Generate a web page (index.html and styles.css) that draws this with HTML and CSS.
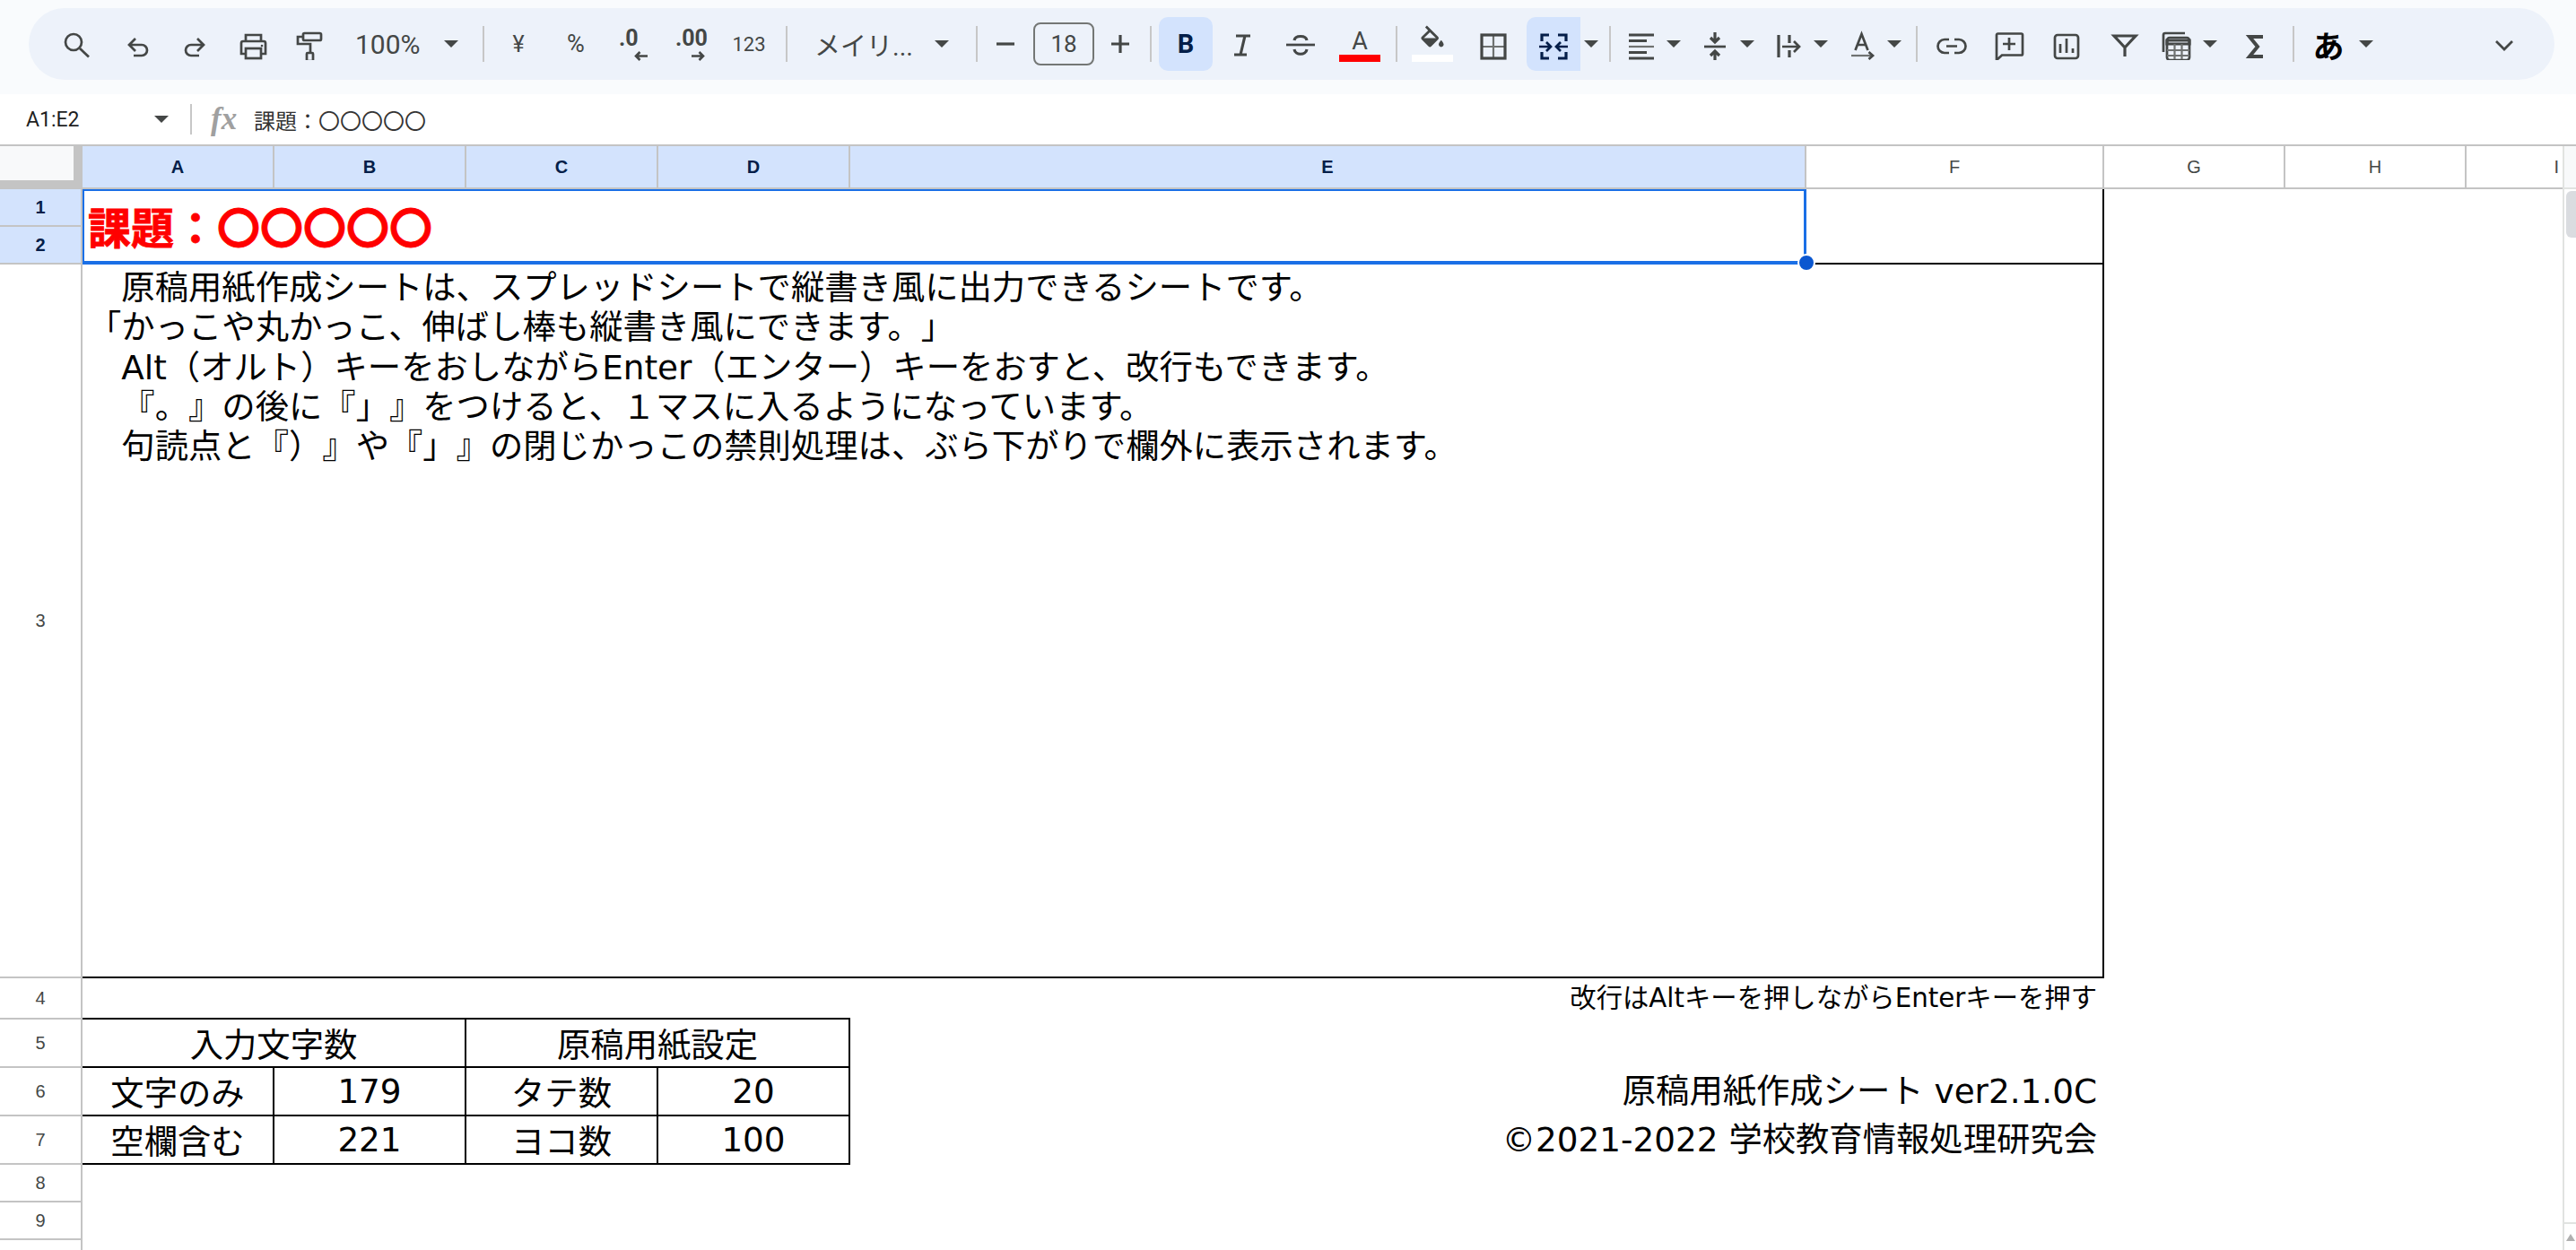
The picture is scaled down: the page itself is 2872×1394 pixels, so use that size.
FILE: index.html
```html
<!DOCTYPE html>
<html lang="ja">
<head>
<meta charset="utf-8">
<title>原稿用紙作成シート</title>
<link rel="stylesheet" href="styles.css">
</head>
<body>
<header class="topbar">
  <div class="pill">
    <span class="t w64"><svg class="ic" viewBox="0 0 36 36"><circle cx="14" cy="16" r="9"/><path d="M21 23l10 9.5"/></svg></span>
    <span class="t w72"><svg class="ic" viewBox="0 0 36 36"><path d="M15 12l-7 7 7 7M8 19h14a6 6 0 0 1 0 12h-9"/></svg></span>
    <span class="t w54"><svg class="ic" viewBox="0 0 36 36"><path d="M21 12l7 7-7 7M28 19H14a6 6 0 0 0 0 12h9"/></svg></span>
    <span class="t w76"><svg class="ic" viewBox="0 0 36 36"><path d="M10 15V8h17v7M10 29H5V17a2 2 0 0 1 2-2h23a2 2 0 0 1 2 2v12h-5"/><rect x="10" y="23" width="17" height="11"/><circle class="dot" cx="28" cy="20" r="1.3"/></svg></span>
    <span class="t w48"><svg class="ic" viewBox="0 0 36 36"><rect x="12" y="6" width="20" height="8" rx="1.5"/><path d="M12 10H6v8h14v9"/><rect x="16" y="28" width="7" height="9" rx="1"/></svg></span>
    <span class="zoomlabel">100%</span><span class="caret"></span>
    <span class="sep m25"></span>
    <span class="t w76 txt24">¥</span>
    <span class="t w52 txt26">%</span>
    <span class="t w74 dec"><b class="dectxt">.0</b><svg class="arrow lft" viewBox="0 0 16 11"><path d="M15 5.5H2M6.5 1L2 5.5 6.5 10"/></svg></span>
    <span class="t w56 dec"><b class="dectxt">.00</b><svg class="arrow rgt" viewBox="0 0 16 11"><path d="M1 5.5h13M9.5 1L14 5.5 9.5 10"/></svg></span>
    <span class="t w74 txt22">123</span>
    <span class="sep m4"></span>
    <span class="fontlabel">メイリ...</span><span class="caret"></span>
    <span class="sep m28"></span>
    <span class="t w62"><svg class="ic" viewBox="0 0 36 36"><path class="thick" d="M8 18h20"/></svg></span>
    <span class="sizebox">18</span>
    <span class="t w58"><svg class="ic" viewBox="0 0 36 36"><path class="thick" d="M8 18h20M18 8v20"/></svg></span>
    <span class="sep m4"></span>
    <span class="t w60 m8 active bold">B</span>
    <span class="t w68"><svg class="ic" viewBox="0 0 36 36"><path class="thick" d="M10 9h16M8 30h14M20 9l-5 21"/></svg></span>
    <span class="t w60"><svg class="ic" viewBox="0 0 36 36"><path d="M2 19h32"/><path class="thick" d="M11 14c1-6 13-6 14 0M11 24c1 7 13 7 14 0"/></svg></span>
    <span class="t w72 colora"><span class="aglyph">A</span><span class="colorbar red"></span></span>
    <span class="sep m4"></span>
    <span class="t w78 colora"><svg class="fill" viewBox="2 1 20 19"><path d="M16.56 10.94L7.62 2 6.21 3.41l2.38 2.38-5.15 5.15c-.59.59-.59 1.54 0 2.12l5.5 5.5c.29.29.68.44 1.06.44s.77-.15 1.06-.44l5.5-5.5c.59-.58.59-1.53 0-2.12zM5.21 12L10 7.21 14.79 12H5.21zM19 13.5s-2 2.17-2 3.5c0 1.1.9 2 2 2s2-.9 2-2c0-1.33-2-3.5-2-3.5z"/></svg><span class="colorbar white"></span></span>
    <span class="t w58"><svg class="ic" viewBox="0 0 36 36"><path class="soft" d="M18 8v26M5 21h26"/><rect class="thick" x="5" y="8" width="26" height="26"/></svg></span>
    <span class="t w60 m8 active left"><svg class="ic navy" viewBox="0 0 36 36"><path class="thick" d="M13 8H5v7M5 27v7h8M23 8h9v7M32 27v7h-9"/><path d="M2 21h13M10 16l5 5-5 5M34 21H21M26 16l-5 5 5 5"/></svg></span>
    <span class="caret w24"></span>
    <span class="sep m8"></span>
    <span class="t w52 m8"><svg class="ic" viewBox="0 0 36 36"><path class="thick" d="M4 8h28M4 14.5h20M4 34h28M4 27.5h20"/><path class="soft" d="M4 21h28"/></svg></span>
    <span class="caret"></span>
    <span class="t w52 m10"><svg class="ic" viewBox="0 0 36 36"><path d="M6 21h24"/><path class="thick" d="M18 5v11M13 11l5 5 5-5M18 37V26M13 31l5-5 5 5"/></svg></span>
    <span class="caret"></span>
    <span class="t w52 m10"><svg class="ic" viewBox="0 0 36 36"><path class="thick" d="M7 8v25M19 8v9M19 25v8"/><path d="M11 21h18M24 15l6 6-6 6"/></svg></span>
    <span class="caret"></span>
    <span class="t w50 m12"><svg class="ic" viewBox="0 0 36 36"><path d="M9.5 25l7-18 7 18M12 19h9"/><path class="soft" d="M5 31h23"/><path d="M24.5 27l4.500 4-4.500 4"/></svg></span>
    <span class="caret"></span>
    <span class="sep m14"></span>
    <span class="t w76"><svg class="ic" viewBox="0 0 36 36"><path d="M15 13h-5a7.500 7.500 0 0 0 0 15h5M21 13h5a7.500 7.500 0 0 1 0 15h-5M12 20.500h12"/></svg></span>
    <span class="t w52"><svg class="ic" viewBox="0 0 36 36"><path d="M4 36V8a1.500 1.500 0 0 1 1.500-1.500h26A1.500 1.500 0 0 1 33 8v21a1.500 1.500 0 0 1-1.500 1.500H10z"/><path d="M18 11v14M11 18h14"/></svg></span>
    <span class="t w76"><svg class="ic" viewBox="0 0 36 36"><rect x="5" y="8" width="26" height="26" rx="3"/><path d="M11 18v10M18 12v16M25 23v5"/></svg></span>
    <span class="t w52"><svg class="ic" viewBox="0 0 36 36"><path class="thick" d="M7 9h24L19 22zM19 22v10"/></svg></span>
    <span class="t w56 m4"><svg class="ic" viewBox="0 0 36 36"><path d="M28 6H6a2 2 0 0 0-2 2v19"/><rect x="8" y="11" width="25" height="25" rx="3"/><path class="thick" d="M8 14h25v4H8z"/><path class="soft" d="M8 25h25M8 31h25M16.500 18v17M24.500 18v17"/></svg></span>
    <span class="caret"></span>
    <span class="t w70 m6"><svg class="ic" viewBox="0 0 36 36"><path class="sigma" d="M26 10H11l9 11-9 11h15"/></svg></span>
    <span class="sep m6"></span>
    <span class="t w64 m6 kana">あ</span>
    <span class="caret"></span>
    <span class="t w60 chev"><svg class="ic" viewBox="0 0 36 36"><path d="M9 15l9 9 9-9"/></svg></span>
  </div>
</header>

<section class="fbar">
  <span class="namebox">A1:E2</span><span class="caret nbcaret"></span>
  <span class="sep fsep"></span>
  <span class="fx">fx</span>
  <span class="ftext">課題：〇〇〇〇〇</span>
</section>

<main class="sheet">
  <div class="corner"></div>
  <div class="ch on">A</div><div class="ch on">B</div><div class="ch on">C</div><div class="ch on">D</div><div class="ch on">E</div>
  <div class="ch">F</div><div class="ch">G</div><div class="ch">H</div><div class="ch chi">I</div>
  <div class="sbtop"></div>

  <div class="rh on r2">1</div>
  <div class="rh on r3">2</div>
  <div class="rh r4">3</div>
  <div class="rh r5">4</div>
  <div class="rh r6">5</div>
  <div class="rh r7">6</div>
  <div class="rh r8">7</div>
  <div class="rh r9">8</div>
  <div class="rh r10">9</div>
  <div class="rh r11"></div>

  <div class="sel"><span class="title">課題：〇〇〇〇〇</span><span class="handle"></span></div>
  <div class="fcell"></div>
  <div class="bodycell">　原稿用紙作成シートは、スプレッドシートで縦書き風に出力できるシートです。
「かっこや丸かっこ、伸ばし棒も縦書き風にできます。」
　Alt（オルト）キーをおしながらEnter（エンター）キーをおすと、改行もできます。
　『。』の後に『」』をつけると、１マスに入るようになっています。
　句読点と『）』や『」』の閉じかっこの禁則処理は、ぶら下がりで欄外に表示されます。</div>
  <div class="tabletop"></div>
  <div class="note">改行はAltキーを押しながらEnterキーを押す</div>

  <div class="tc r6 span-ab">入力文字数</div>
  <div class="tc r6 span-cd">原稿用紙設定</div>
  <div class="tc r7 ca">文字のみ</div>
  <div class="tc r7 cb">179</div>
  <div class="tc r7 cc">タテ数</div>
  <div class="tc r7 cd">20</div>
  <div class="tc r8 ca">空欄含む</div>
  <div class="tc r8 cb">221</div>
  <div class="tc r8 cc">ヨコ数</div>
  <div class="tc r8 cd">100</div>

  <div class="credit r7">原稿用紙作成シート ver2.1.0C</div>
  <div class="credit r8">©2021-2022 学校教育情報処理研究会</div>

  <aside class="sbtrack">
    <div class="thumb"></div>
    <div class="sbdown"><span class="sbarrow"></span></div>
  </aside>
</main>
</body>
</html>
```
FILE: styles.css
```css
* { box-sizing: border-box; }
html, body { margin: 0; height: 100%; overflow: hidden; background: #fff; }
body { font-family: Roboto, "Noto Sans CJK JP", sans-serif; color: #444746; text-spacing-trim: space-all; }

.topbar { height: 105px; background: #f9fbfd; padding: 9px 24px 16px 32px; }
.pill { height: 80px; background: #edf2fa; border-radius: 40px; padding-left: 22px; padding-right: 26px; display: flex; align-items: center; }

.t { display: flex; align-items: center; justify-content: center; height: 60px; flex: none; }
.w48 { width: 48px; } .w50 { width: 50px; } .w52 { width: 52px; } .w54 { width: 54px; }
.w56 { width: 56px; } .w58 { width: 58px; } .w60 { width: 60px; } .w62 { width: 62px; }
.w64 { width: 64px; } .w68 { width: 68px; } .w70 { width: 70px; } .w72 { width: 72px; }
.w74 { width: 74px; } .w76 { width: 76px; } .w78 { width: 78px; }
.m4 { margin-left: 4px; } .m6 { margin-left: 6px; } .m8 { margin-left: 8px; } .m10 { margin-left: 10px; }
.m12 { margin-left: 12px; } .m14 { margin-left: 14px; } .m25 { margin-left: 25px; } .m28 { margin-left: 28px; }

.ic { width: 36px; height: 36px; fill: none; stroke: #444746; stroke-width: 2.7; }
.ic .thick { stroke-width: 3.2; }
.ic .soft { stroke: #6f7271; stroke-width: 2.2; }
.ic .dot { fill: #444746; stroke: none; }
.ic .sigma { stroke-width: 4; }
.ic.navy { stroke: #041e49; }

.sep { width: 2px; height: 40px; background: #c7c7c7; flex: none; }
.caret { width: 20px; height: 8px; flex: none; display: flex; justify-content: center; }
.caret::after { content: ""; border-left: 8px solid transparent; border-right: 8px solid transparent; border-top: 8px solid #444746; }
.caret.w24 { width: 24px; }

.zoomlabel { margin-left: 28px; width: 97px; font-size: 30px; flex: none; }
.fontlabel { margin-left: 30px; width: 132px; font-size: 29px; flex: none; white-space: nowrap; }
.txt22 { font-size: 22px; }
.txt24 { font-size: 25px; }
.txt26 { font-size: 27px; }

.dec { flex-direction: column; align-items: flex-start; position: relative; }
.dectxt { font-size: 25px; line-height: 24px; font-weight: 700; }
.w74.dec { padding-left: 22px; }
.w56.dec { padding-left: 11px; }
.arrow { width: 16px; height: 11px; fill: none; stroke: #444746; stroke-width: 2.6; margin-top: 2px; }
.arrow.lft { margin-left: 17px; }
.arrow.rgt { margin-left: 17px; }

.sizebox { width: 68px; height: 48px; border: 2px solid #747775; border-radius: 8px; display: flex; align-items: center; justify-content: center; font-size: 26px; flex: none; }
.active { background: #d3e3fd; border-radius: 10px; }
.active.left { border-radius: 10px 0 0 10px; }
.bold { font-size: 29px; font-weight: 700; color: #041e49; }

.colora { flex-direction: column; justify-content: flex-start; padding-top: 15px; }
.aglyph { font-size: 27px; line-height: 24px; height: 27px; }
.colorbar { height: 8px; display: block; }
.colorbar.red { width: 46px; background: #f00; }
.colorbar.white { width: 46px; background: #fff; margin-top: 7px; }
.fill { width: 28px; height: 27px; fill: #444746; margin-top: -7px; }

.kana { color: #000; font-size: 35px; font-weight: 700; font-family: "Noto Sans CJK JP", sans-serif; }
.chev { margin-left: auto; }

.fbar { height: 56px; background: #fff; display: flex; align-items: center; padding-left: 29px; }
.namebox { font-size: 23px; color: #1f1f1f; width: 141px; flex: none; }
.nbcaret { margin-right: 22px; }
.fsep { height: 34px; }
.fx { font-family: "Liberation Serif", serif; font-style: italic; font-weight: 700; font-size: 35px; color: #a0a0a0; margin-left: 21px; width: 48px; flex: none; line-height: 36px; }
.ftext { font-family: "Noto Sans CJK JP", sans-serif; font-size: 24px; color: #333; }

.sheet {
  height: 1233px;
  border-top: 2px solid #c4c4c4;
  display: grid;
  grid-template-columns: 92px 214px 214px 214px 214px 1066px 332px 202px 202px 107px 15px;
  grid-template-rows: 48px 42px 42px 796px 46px 54px 54px 54px 42px 42px 11px;
  font-family: "DejaVu Sans", "Noto Sans CJK JP", sans-serif;
  color: #000;
}
.corner { background: #f8f9fa; border-right: 10px solid #c4c4c4; border-bottom: 10px solid #c4c4c4; }
.ch { display: flex; align-items: center; justify-content: center; font-family: "Liberation Sans", sans-serif; font-size: 20px; color: #444746; border-right: 2px solid #c4c4c4; border-bottom: 2px solid #c4c4c4; background: #fff; }
.ch.on, .rh.on { background: #d3e3fd; color: #041e49; font-weight: 700; }
.chi { justify-content: flex-end; padding-right: 4px; border-right: 0; }
.rh { grid-column: 1; display: flex; align-items: center; justify-content: center; font-family: "Liberation Sans", sans-serif; font-size: 20px; color: #444746; border-right: 2px solid #c4c4c4; border-bottom: 2px solid #c4c4c4; background: #fff; }
.rh.r11 { border-bottom: 0; }

.r2 { grid-row: 2; } .r3 { grid-row: 3; } .r4 { grid-row: 4; } .r5 { grid-row: 5; } .r6 { grid-row: 6; }
.r7 { grid-row: 7; } .r8 { grid-row: 8; } .r9 { grid-row: 9; } .r10 { grid-row: 10; } .r11 { grid-row: 11; }

.sel { grid-column: 2 / 7; grid-row: 2 / 4; border: solid #1a6fe6; border-width: 2px 3px 4px 2px; position: relative; display: flex; align-items: flex-start; padding-left: 4px; background: #fff; }
.title { color: #f00; font-family: "Noto Sans CJK JP", sans-serif; font-weight: 700; font-size: 48px; line-height: 60px; margin-top: 8px; -webkit-text-stroke: 0.8px #f00; }
.handle { position: absolute; right: -13px; bottom: -12px; width: 20px; height: 20px; border-radius: 50%; background: #0b57d0; border: 2px solid #fff; }

.fcell { grid-column: 7; grid-row: 2 / 4; border-right: 2px solid #000; border-bottom: 2px solid #000; }
.bodycell { grid-column: 2 / 8; grid-row: 4; border-right: 2px solid #000; border-bottom: 2px solid #000; white-space: pre; font-size: 37.33px; line-height: 44.3px; padding: 4px 0 0 6px; }
.tabletop { grid-column: 2 / 6; grid-row: 5; border-bottom: 2px solid #000; }
.note { grid-column: 6 / 8; grid-row: 5; text-align: right; padding-right: 8px; font-size: 29.33px; line-height: 44px; white-space: nowrap; }

.tc { display: flex; align-items: center; justify-content: center; font-size: 37.33px; border-right: 2px solid #000; border-bottom: 2px solid #000; }
.span-ab { grid-column: 2 / 4; }
.span-cd { grid-column: 4 / 6; }
.ca { grid-column: 2; } .cb { grid-column: 3; } .cc { grid-column: 4; } .cd { grid-column: 5; }
.credit { grid-column: 6 / 8; text-align: right; padding-right: 8px; font-size: 37.33px; line-height: 52px; white-space: nowrap; }

.sbtop { grid-column: 11; grid-row: 1; background: #f8f9fa; border-left: 2px solid #e1e3e1; border-bottom: 2px solid #e1e3e1; }
.sbtrack { grid-column: 11; grid-row: 2 / 12; border-left: 2px solid #e1e3e1; display: flex; flex-direction: column; justify-content: space-between; }
.thumb { width: 12px; height: 52px; margin: 2px 0 0 2px; background: #dadce0; border-radius: 6px 0 0 6px; }
.sbdown { height: 31px; border-top: 2px solid #e1e3e1; display: flex; align-items: center; justify-content: center; }
.sbarrow { border-left: 5px solid transparent; border-right: 5px solid transparent; border-bottom: 8px solid #b0b0b0; }
```
